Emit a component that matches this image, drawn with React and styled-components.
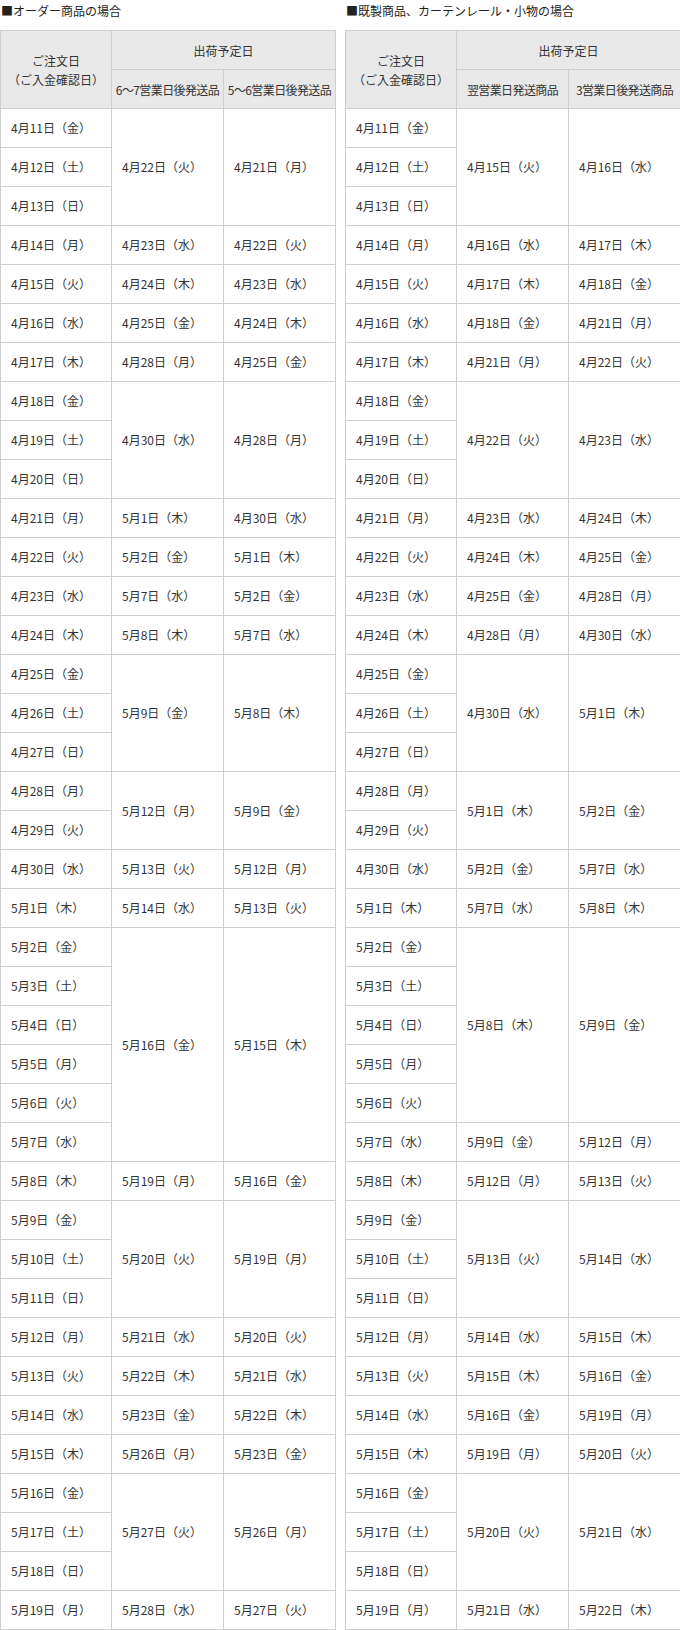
import React from "react";
import styled, { createGlobalStyle } from "styled-components";

const Global = createGlobalStyle`
  html, body { margin: 0; padding: 0; background: #fff; }
  body {
    font-family: "Noto Sans CJK JP", "Noto Sans", sans-serif;
    color: #333;
    font-size: 12px;
  }
`;

const Page = styled.div`
  display: grid;
  grid-template-columns: 335px 335px;
  column-gap: 10px;
  width: 680px;
`;

const Section = styled.section`
  display: flex;
  flex-direction: column;
`;

const Title = styled.h2`
  margin: 0;
  height: 30px;
  padding-left: 1px;
  font-size: 12px;
  font-weight: normal;
  line-height: 21px;
  color: #222;
  white-space: nowrap;
`;

const Table = styled.table`
  width: 335px;
  border-collapse: collapse;
  table-layout: fixed;
  font-size: 12px;
`;

const Th = styled.th`
  background: #e8e8e8;
  border: 1px solid #cfcfcf;
  font-weight: normal;
  text-align: center;
  vertical-align: middle;
  padding: 0;
  height: 38px;
  line-height: 19px;
  color: #333;
  white-space: nowrap;
  letter-spacing: ${(p) => (p.$tight ? "-0.6px" : "0")};
`;

const Td = styled.td`
  border: 1px solid #cfcfcf;
  padding: 0 10px;
  height: 38px;
  line-height: 18px;
  vertical-align: middle;
  text-align: left;
  white-space: nowrap;
  color: #333;
`;

const WD = ["日", "月", "火", "水", "木", "金", "土"];
const fmt = (m, d) => `${m}月${d}日（${WD[new Date(2025, m - 1, d).getDay()]}）`;
const parse = (s) => s.split("/").map(Number);

const orderDates = [];
for (let d = 11; d <= 30; d++) orderDates.push([4, d]);
for (let d = 1; d <= 19; d++) orderDates.push([5, d]);

// [rowSpan, colA, colB]
const orderGroups = [
  [3, "4/22", "4/21"], [1, "4/23", "4/22"], [1, "4/24", "4/23"], [1, "4/25", "4/24"],
  [1, "4/28", "4/25"], [3, "4/30", "4/28"], [1, "5/1", "4/30"], [1, "5/2", "5/1"],
  [1, "5/7", "5/2"], [1, "5/8", "5/7"], [3, "5/9", "5/8"], [2, "5/12", "5/9"],
  [1, "5/13", "5/12"], [1, "5/14", "5/13"], [6, "5/16", "5/15"], [1, "5/19", "5/16"],
  [3, "5/20", "5/19"], [1, "5/21", "5/20"], [1, "5/22", "5/21"], [1, "5/23", "5/22"],
  [1, "5/26", "5/23"], [3, "5/27", "5/26"], [1, "5/28", "5/27"],
];

const readyGroups = [
  [3, "4/15", "4/16"], [1, "4/16", "4/17"], [1, "4/17", "4/18"], [1, "4/18", "4/21"],
  [1, "4/21", "4/22"], [3, "4/22", "4/23"], [1, "4/23", "4/24"], [1, "4/24", "4/25"],
  [1, "4/25", "4/28"], [1, "4/28", "4/30"], [3, "4/30", "5/1"], [2, "5/1", "5/2"],
  [1, "5/2", "5/7"], [1, "5/7", "5/8"], [5, "5/8", "5/9"], [1, "5/9", "5/12"],
  [1, "5/12", "5/13"], [3, "5/13", "5/14"], [1, "5/14", "5/15"], [1, "5/15", "5/16"],
  [1, "5/16", "5/19"], [1, "5/19", "5/20"], [3, "5/20", "5/21"], [1, "5/21", "5/22"],
];

function buildRows(groups) {
  const starts = {};
  let i = 0;
  groups.forEach((g) => {
    starts[i] = g;
    i += g[0];
  });
  return orderDates.map(([m, d], idx) => ({ date: fmt(m, d), group: starts[idx] }));
}

function ScheduleTable({ title, colA, colB, groups }) {
  const rows = buildRows(groups);
  return (
    <Section>
      <Title>■{title}</Title>
      <Table>
        <colgroup>
          <col style={{ width: 111 }} />
          <col style={{ width: 112 }} />
          <col style={{ width: 112 }} />
        </colgroup>
        <thead>
          <tr>
            <Th rowSpan={2}>
              ご注文日
              <br />
              （ご入金確認日）
            </Th>
            <Th colSpan={2}>出荷予定日</Th>
          </tr>
          <tr>
            <Th $tight>{colA}</Th>
            <Th $tight>{colB}</Th>
          </tr>
        </thead>
        <tbody>
          {rows.map((r, idx) => (
            <tr key={idx}>
              <Td>{r.date}</Td>
              {r.group && (
                <>
                  <Td rowSpan={r.group[0]}>{fmt(...parse(r.group[1]))}</Td>
                  <Td rowSpan={r.group[0]}>{fmt(...parse(r.group[2]))}</Td>
                </>
              )}
            </tr>
          ))}
        </tbody>
      </Table>
    </Section>
  );
}

export default function App() {
  return (
    <>
      <Global />
      <Page>
        <ScheduleTable
          title="オーダー商品の場合"
          colA="6〜7営業日後発送品"
          colB="5〜6営業日後発送品"
          groups={orderGroups}
        />
        <ScheduleTable
          title="既製商品、カーテンレール・小物の場合"
          colA="翌営業日発送商品"
          colB="3営業日後発送商品"
          groups={readyGroups}
        />
      </Page>
    </>
  );
}
